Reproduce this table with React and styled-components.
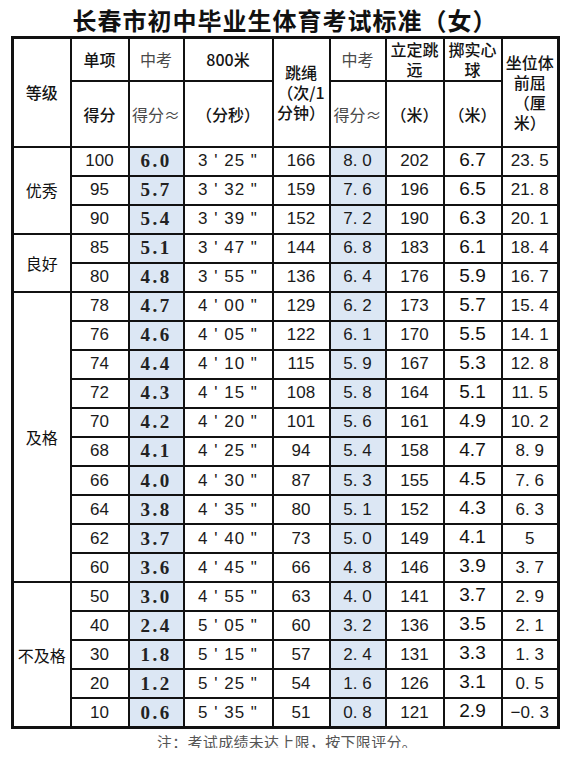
import React from 'react';
import styled, { createGlobalStyle } from 'styled-components';

const GlobalStyle = createGlobalStyle`
  html, body {
    margin: 0;
    padding: 0;
    background: #ffffff;
  }
  body {
    font-family: "Liberation Sans", "Noto Sans CJK SC", sans-serif;
    color: #111;
  }
`;

const CJK = '"Noto Sans CJK SC", "Noto Sans", sans-serif';

const Page = styled.div`
  width: 570px;
  height: 748px;
  overflow: hidden;
  display: flex;
  flex-direction: column;
  align-items: center;
`;

const TopEdge = styled.div`
  align-self: stretch;
  display: flex;
  justify-content: flex-end;
  height: 3px;
`;

const EdgeShade = styled.div`
  width: 160px;
  background: #e6e8e8;
`;

const Title = styled.h1`
  margin: 4px 0 0 0;
  height: 35px;
  font-family: ${CJK};
  font-size: 24px;
  line-height: 32px;
  font-weight: 700;
  color: #111;
  letter-spacing: 1px;
`;

const Table = styled.table`
  width: 546px;
  margin-left: 1px;
  border-collapse: collapse;
  table-layout: fixed;
  border: 3px solid #111;
`;

const Col = styled.col`
  width: ${p => p.$w}px;
`;

const HeadRow = styled.tr`
  height: ${p => p.$h}px;
`;

const Th = styled.th`
  border: 2px solid #111;
  padding: 0;
  vertical-align: middle;
  text-align: center;
  font-family: ${CJK};
  font-size: 16px;
  line-height: 20px;
  font-weight: ${p => (p.$light ? 400 : 500)};
  color: ${p => (p.$light ? '#4a4a4a' : '#141414')};
`;

const BodyRow = styled.tr`
  height: 29.05px;
`;

const GroupCell = styled.td`
  border: 2px solid #111;
  padding: 0;
  text-align: center;
  vertical-align: middle;
  font-family: ${CJK};
  font-size: 16px;
  color: #111;
`;

const fonts = {
  sans: `
    font-family: "Liberation Sans", sans-serif;
    font-size: 17px;
    color: #1a1a1a;
  `,
  score: `
    font-family: "Liberation Serif", "DejaVu Serif", serif;
    font-size: 19px;
    font-weight: 700;
    letter-spacing: 2.5px;
    color: #222;
  `,
  time: `
    font-family: "Liberation Sans", sans-serif;
    font-size: 17px;
    letter-spacing: 1px;
    color: #1a1a1a;
  `,
  ball: `
    font-family: "Liberation Sans", sans-serif;
    font-size: 19px;
    line-height: 22px;
    padding-bottom: 3px;
    color: #111;
  `,
};

const Td = styled.td`
  border: 2px solid #111;
  padding: 0;
  text-align: center;
  vertical-align: middle;
  white-space: pre;
  line-height: 20px;
  background: ${p => (p.$hl ? '#dce7f4' : '#ffffff')};
  ${p => fonts[p.$kind || 'sans']}
`;

const Note = styled.div`
  margin-top: 2px;
  margin-left: 4px;
  font-family: ${CJK};
  font-size: 15px;
  color: #555;
  letter-spacing: 0.3px;
`;

const groups = [
  { label: '优秀', rows: [
    ['100', '6.0', "3 ' 25 \"", '166', '8. 0', '202', '6.7', '23. 5'],
    ['95', '5.7', "3 ' 32 \"", '159', '7. 6', '196', '6.5', '21. 8'],
    ['90', '5.4', "3 ' 39 \"", '152', '7. 2', '190', '6.3', '20. 1'],
  ] },
  { label: '良好', rows: [
    ['85', '5.1', "3 ' 47 \"", '144', '6. 8', '183', '6.1', '18. 4'],
    ['80', '4.8', "3 ' 55 \"", '136', '6. 4', '176', '5.9', '16. 7'],
  ] },
  { label: '及格', rows: [
    ['78', '4.7', "4 ' 00 \"", '129', '6. 2', '173', '5.7', '15. 4'],
    ['76', '4.6', "4 ' 05 \"", '122', '6. 1', '170', '5.5', '14. 1'],
    ['74', '4.4', "4 ' 10 \"", '115', '5. 9', '167', '5.3', '12. 8'],
    ['72', '4.3', "4 ' 15 \"", '108', '5. 8', '164', '5.1', '11. 5'],
    ['70', '4.2', "4 ' 20 \"", '101', '5. 6', '161', '4.9', '10. 2'],
    ['68', '4.1', "4 ' 25 \"", '94', '5. 4', '158', '4.7', '8. 9'],
    ['66', '4.0', "4 ' 30 \"", '87', '5. 3', '155', '4.5', '7. 6'],
    ['64', '3.8', "4 ' 35 \"", '80', '5. 1', '152', '4.3', '6. 3'],
    ['62', '3.7', "4 ' 40 \"", '73', '5. 0', '149', '4.1', '5'],
    ['60', '3.6', "4 ' 45 \"", '66', '4. 8', '146', '3.9', '3. 7'],
  ] },
  { label: '不及格', rows: [
    ['50', '3.0', "4 ' 55 \"", '63', '4. 0', '141', '3.7', '2. 9'],
    ['40', '2.4', "5 ' 05 \"", '60', '3. 2', '136', '3.5', '2. 1'],
    ['30', '1.8', "5 ' 15 \"", '57', '2. 4', '131', '3.3', '1. 3'],
    ['20', '1.2', "5 ' 25 \"", '54', '1. 6', '126', '3.1', '0. 5'],
    ['10', '0.6', "5 ' 35 \"", '51', '0. 8', '121', '2.9', '−0. 3'],
  ] },
];

// column kinds for the eight value columns
const cols = [
  { kind: 'sans' },
  { kind: 'score', hl: true },
  { kind: 'time' },
  { kind: 'sans' },
  { kind: 'sans', hl: true },
  { kind: 'sans' },
  { kind: 'ball' },
  { kind: 'sans' },
];

const widths = [58, 58, 55, 89, 57, 56, 58, 58, 57];

export default function App() {
  return (
    <Page>
      <GlobalStyle />
      <TopEdge><EdgeShade /></TopEdge>
      <Title>长春市初中毕业生体育考试标准（女）</Title>
      <Table>
        <colgroup>
          {widths.map((w, i) => <Col key={i} $w={w} />)}
        </colgroup>
        <thead>
          <HeadRow $h={43}>
            <Th rowSpan={2}>等级</Th>
            <Th>单项</Th>
            <Th $light>中考</Th>
            <Th>800米</Th>
            <Th rowSpan={2}>跳绳<br />（次/1<br />分钟）</Th>
            <Th $light>中考</Th>
            <Th>立定跳<br />远</Th>
            <Th>掷实心<br />球</Th>
            <Th rowSpan={2}>坐位体<br />前屈<br />（厘<br />米）</Th>
          </HeadRow>
          <HeadRow $h={66}>
            <Th>得分</Th>
            <Th $light>得分≈</Th>
            <Th>（分秒）</Th>
            <Th $light>得分≈</Th>
            <Th>（米）</Th>
            <Th>（米）</Th>
          </HeadRow>
        </thead>
        <tbody>
          {groups.map(g =>
            g.rows.map((row, ri) => (
              <BodyRow key={g.label + ri}>
                {ri === 0 && <GroupCell rowSpan={g.rows.length}>{g.label}</GroupCell>}
                {row.map((v, ci) => (
                  <Td key={ci} $kind={cols[ci].kind} $hl={cols[ci].hl}>{v}</Td>
                ))}
              </BodyRow>
            ))
          )}
        </tbody>
      </Table>
      <Note>注：考试成绩未达上限，按下限评分。</Note>
    </Page>
  );
}
